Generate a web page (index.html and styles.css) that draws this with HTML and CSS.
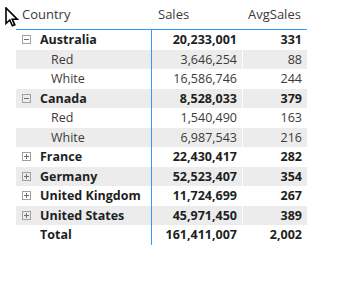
FILE: index.html
```html
<!DOCTYPE html>
<html>
<head>
<meta charset="utf-8">
<link rel="stylesheet" href="styles.css">
</head>
<body>
<div class="visual">
  <div class="matrix">
    <div class="row head">
      <div class="c1">Country</div>
      <div class="c2">Sales</div>
      <div class="c3">AvgSales</div>
    </div>
    <div class="row bold">
      <div class="c1"><span class="tog minus"></span>Australia</div>
      <div class="c2">20,233,001</div>
      <div class="c3">331</div>
    </div>
    <div class="row alt">
      <div class="c1 child">Red</div>
      <div class="c2">3,646,254</div>
      <div class="c3">88</div>
    </div>
    <div class="row">
      <div class="c1 child">White</div>
      <div class="c2">16,586,746</div>
      <div class="c3">244</div>
    </div>
    <div class="row bold alt">
      <div class="c1"><span class="tog minus"></span>Canada</div>
      <div class="c2">8,528,033</div>
      <div class="c3">379</div>
    </div>
    <div class="row">
      <div class="c1 child">Red</div>
      <div class="c2">1,540,490</div>
      <div class="c3">163</div>
    </div>
    <div class="row alt">
      <div class="c1 child">White</div>
      <div class="c2">6,987,543</div>
      <div class="c3">216</div>
    </div>
    <div class="row bold">
      <div class="c1"><span class="tog plus"></span>France</div>
      <div class="c2">22,430,417</div>
      <div class="c3">282</div>
    </div>
    <div class="row bold alt">
      <div class="c1"><span class="tog plus"></span>Germany</div>
      <div class="c2">52,523,407</div>
      <div class="c3">354</div>
    </div>
    <div class="row bold">
      <div class="c1"><span class="tog plus"></span>United Kingdom</div>
      <div class="c2">11,724,699</div>
      <div class="c3">267</div>
    </div>
    <div class="row bold alt">
      <div class="c1"><span class="tog plus"></span>United States</div>
      <div class="c2">45,971,450</div>
      <div class="c3">389</div>
    </div>
    <div class="row bold total">
      <div class="c1 tot">Total</div>
      <div class="c2">161,411,007</div>
      <div class="c3">2,002</div>
    </div>
  </div>
  <svg class="cursor" width="14" height="20" viewBox="0 0 14 20">
    <path d="M1,1 L1,16.5 L4.8,13 L7.4,18.8 L9.8,17.8 L7.2,12.2 L12.2,12.2 Z" fill="#fff" stroke="#000" stroke-width="1.6" stroke-linejoin="miter"/>
  </svg>
</div>
</body>
</html>
```
FILE: styles.css
```css
html, body {
  margin: 0;
  padding: 0;
  background: #fff;
}
body {
  font-family: "Open Sans", "Segoe UI", sans-serif;
  font-size: 12.5px;
  color: #252423;
}
.visual {
  position: relative;
  width: 358px;
  height: 307px;
  padding-left: 16px;
  box-sizing: border-box;
}
.matrix {
  width: 291px;
  display: flex;
  flex-direction: column;
}
.row {
  display: grid;
  grid-template-columns: 136px 90px 65px;
  height: 19.5px;
  align-items: center;
  color: #3b3a39;
}
.row > div {
  height: 100%;
  display: flex;
  align-items: center;
  white-space: nowrap;
}
.row.head {
  height: 29px;
  border-bottom: 1px solid #3399ff;
  color: #3b3a39;
  font-size: 13px;
}
.row.head > div {
  padding-bottom: 2px;
  box-sizing: border-box;
}
.c1 {
  padding-left: 6px;
  border-right: 1px solid #3399ff;
}
.c2, .c3 {
  justify-content: flex-end;
  padding-right: 5px;
}
.c3 {
  border-left: 1px solid #fff;
}
.row.head .c1 {
  border-right: none;
}
.row.head .c2 {
  justify-content: flex-start;
  padding-left: 6px;
}
.row.head .c3 {
  justify-content: flex-start;
  padding-left: 5px;
}
.row.alt {
  background: #ececec;
}
.row.bold {
  font-weight: 700;
  color: #201f1e;
}
.child {
  padding-left: 35px;
}
.tot {
  padding-left: 24px;
}
.tog {
  width: 7px;
  height: 7px;
  border: 1px solid #a0a0a0;
  margin-right: 9px;
  position: relative;
  flex: none;
}
.tog::before {
  content: "";
  position: absolute;
  left: 1px;
  top: 3px;
  width: 5px;
  height: 1px;
  background: #707070;
}
.tog.plus::after {
  content: "";
  position: absolute;
  left: 3px;
  top: 1px;
  width: 1px;
  height: 5px;
  background: #707070;
}
.cursor {
  position: absolute;
  left: 5px;
  top: 7px;
}
```
